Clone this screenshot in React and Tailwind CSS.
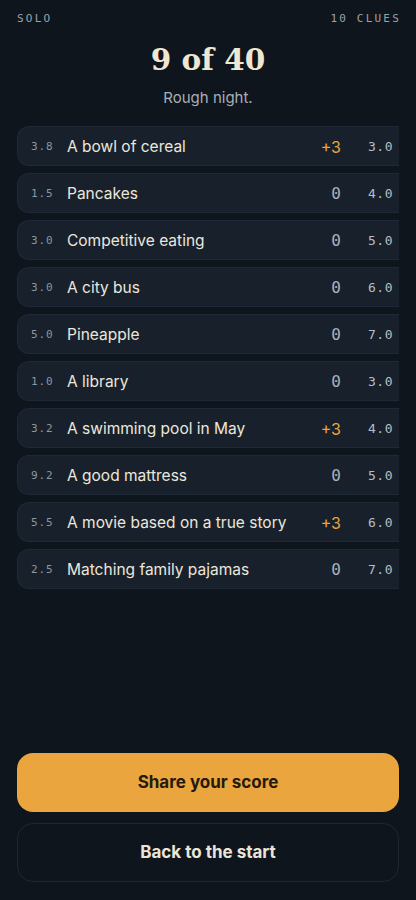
import React from "react";

const rows = [
  { guess: "3.8", clue: "A bowl of cereal", pts: "+3", val: "3.0" },
  { guess: "1.5", clue: "Pancakes", pts: "0", val: "4.0" },
  { guess: "3.0", clue: "Competitive eating", pts: "0", val: "5.0" },
  { guess: "3.0", clue: "A city bus", pts: "0", val: "6.0" },
  { guess: "5.0", clue: "Pineapple", pts: "0", val: "7.0" },
  { guess: "1.0", clue: "A library", pts: "0", val: "3.0" },
  { guess: "3.2", clue: "A swimming pool in May", pts: "+3", val: "4.0" },
  { guess: "9.2", clue: "A good mattress", pts: "0", val: "5.0" },
  { guess: "5.5", clue: "A movie based on a true story", pts: "+3", val: "6.0" },
  { guess: "2.5", clue: "Matching family pajamas", pts: "0", val: "7.0" },
];

const mono = { fontFamily: '"DejaVu Sans Mono", "Liberation Mono", monospace' };

export default function App() {
  return (
    <div
      className="min-h-[900px] h-[900px] bg-[#0f151d] flex flex-col px-[17px]"
      style={{ fontFamily: 'Inter, "Noto Sans", sans-serif' }}
    >
      <div className="flex justify-between pt-[11px] text-[11px] leading-[16px] tracking-[0.2em] text-[#9aa2ab]" style={mono}>
        <span>SOLO</span>
        <span className="-mr-[2px]">10 CLUES</span>
      </div>

      <h1
        className="mt-[13px] text-center text-[29.5px] leading-[40px] text-[#f0e7d3] font-bold"
        style={{ fontFamily: '"DejaVu Serif", "Liberation Serif", serif' }}
      >
        9 of 40
      </h1>
      <p className="mt-[8px] text-center text-[15px] leading-[20px] text-[#a7afb9]">Rough night.</p>

      <div className="mt-[18px] flex flex-col gap-[7px]">
        {rows.map((r, i) => (
          <div
            key={i}
            className="h-[40px] flex items-center bg-[#18212b] border-y border-l border-[#1f2935] rounded-l-[12px] pl-[13px] pr-[6px] pt-[2px]"
          >
            <span className="w-[36px] text-[11px] tracking-[0.08em] text-[#8d96a0]" style={mono}>
              {r.guess}
            </span>
            <span className="flex-1 text-[15.5px] text-[#ece7dc]">{r.clue}</span>
            {r.pts === "0" ? (
              <span className="text-[16px] text-[#a9b1bb]" style={mono}>0</span>
            ) : (
              <span className="text-[16px] text-[#eba53c]">{r.pts}</span>
            )}
            <span className="w-[52px] text-right text-[13px] tracking-[0.04em] text-[#b6bdc5]" style={mono}>
              {r.val}
            </span>
          </div>
        ))}
      </div>

      <div className="mt-auto flex flex-col gap-[11px] pb-[18px]">
        <button className="h-[59px] rounded-[16px] bg-[#eaa53e] text-[#27190a] text-[17px] font-bold">
          Share your score
        </button>
        <button className="h-[59px] rounded-[16px] border border-[#1f2731] text-[#ebe5d8] text-[17px] font-bold">
          Back to the start
        </button>
      </div>
    </div>
  );
}
